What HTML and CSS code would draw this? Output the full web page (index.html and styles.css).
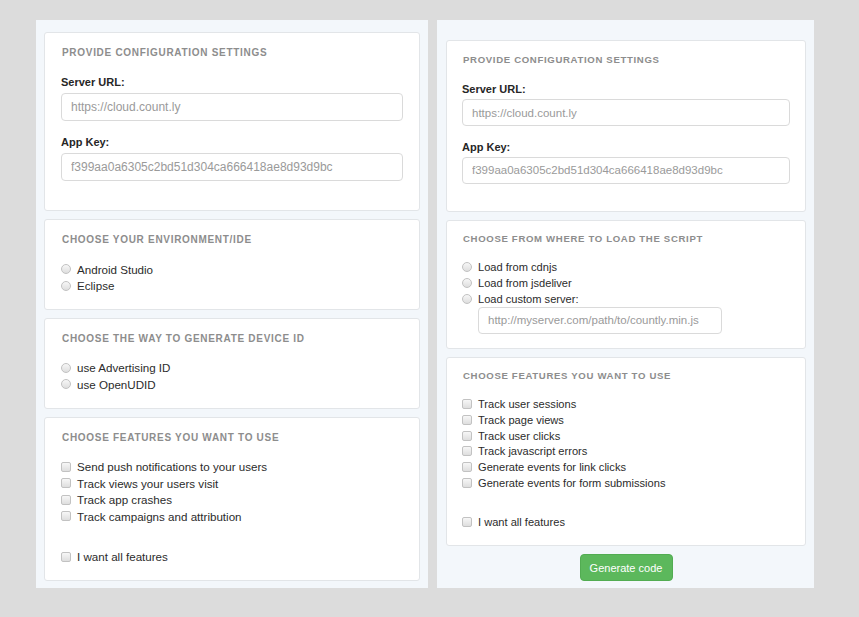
FILE: index.html
```html
<!DOCTYPE html>
<html lang="en">
<head>
<meta charset="utf-8">
<title>Countly SDK configuration</title>
<link rel="stylesheet" href="styles.css">
</head>
<body>
<div class="page">
  <section class="panel panel-left">
    <div class="card card-config">
      <h3 class="card-title">Provide configuration settings</h3>
      <label class="field-label">Server URL:</label>
      <input class="text-input" type="text" placeholder="https://cloud.count.ly">
      <label class="field-label">App Key:</label>
      <input class="text-input last" type="text" placeholder="f399aa0a6305c2bd51d304ca666418ae8d93d9bc">
    </div>
    <div class="card card-choice">
      <h3 class="card-title">Choose your environment/IDE</h3>
      <div class="options">
        <label class="option"><input class="radio" type="radio" name="ide"><span>Android Studio</span></label>
        <label class="option"><input class="radio" type="radio" name="ide"><span>Eclipse</span></label>
      </div>
    </div>
    <div class="card card-choice">
      <h3 class="card-title">Choose the way to generate device ID</h3>
      <div class="options">
        <label class="option"><input class="radio" type="radio" name="devid"><span>use Advertising ID</span></label>
        <label class="option"><input class="radio" type="radio" name="devid"><span>use OpenUDID</span></label>
      </div>
    </div>
    <div class="card card-choice">
      <h3 class="card-title">Choose features you want to use</h3>
      <div class="options">
        <label class="option"><input class="check" type="checkbox"><span>Send push notifications to your users</span></label>
        <label class="option"><input class="check" type="checkbox"><span>Track views your users visit</span></label>
        <label class="option"><input class="check" type="checkbox"><span>Track app crashes</span></label>
        <label class="option"><input class="check" type="checkbox"><span>Track campaigns and attribution</span></label>
        <div class="spacer"></div>
        <label class="option"><input class="check" type="checkbox"><span>I want all features</span></label>
      </div>
    </div>
  </section>

  <section class="panel panel-right">
    <div class="card card-config">
      <h3 class="card-title">Provide configuration settings</h3>
      <label class="field-label">Server URL:</label>
      <input class="text-input" type="text" placeholder="https://cloud.count.ly">
      <label class="field-label">App Key:</label>
      <input class="text-input last" type="text" placeholder="f399aa0a6305c2bd51d304ca666418ae8d93d9bc">
    </div>
    <div class="card card-choice card-load">
      <h3 class="card-title">Choose from where to load the script</h3>
      <div class="options">
        <label class="option"><input class="radio" type="radio" name="src"><span>Load from cdnjs</span></label>
        <label class="option"><input class="radio" type="radio" name="src"><span>Load from jsdeliver</span></label>
        <label class="option"><input class="radio" type="radio" name="src"><span>Load custom server:</span></label>
        <input class="text-input custom-server" type="text" placeholder="http://myserver.com/path/to/countly.min.js">
      </div>
    </div>
    <div class="card card-choice card-features">
      <h3 class="card-title">Choose features you want to use</h3>
      <div class="options">
        <label class="option"><input class="check" type="checkbox"><span>Track user sessions</span></label>
        <label class="option"><input class="check" type="checkbox"><span>Track page views</span></label>
        <label class="option"><input class="check" type="checkbox"><span>Track user clicks</span></label>
        <label class="option"><input class="check" type="checkbox"><span>Track javascript errors</span></label>
        <label class="option"><input class="check" type="checkbox"><span>Generate events for link clicks</span></label>
        <label class="option"><input class="check" type="checkbox"><span>Generate events for form submissions</span></label>
        <div class="spacer"></div>
        <label class="option"><input class="check" type="checkbox"><span>I want all features</span></label>
      </div>
    </div>
    <div class="actions">
      <button class="btn-generate" type="button">Generate code</button>
    </div>
  </section>
</div>
</body>
</html>
```

FILE: styles.css
```css
html, body {
  margin: 0;
  padding: 0;
}

body {
  background: #dcdcdc;
  font-family: "Liberation Sans", Arial, Helvetica, sans-serif;
  color: #2e2e2e;
}

.page {
  display: flex;
  align-items: flex-start;
  gap: 9px;
  padding: 20px 0 0 36px;
}

.panel {
  background: #f3f7fb;
  box-sizing: border-box;
  display: flex;
  flex-direction: column;
}

.panel-left {
  width: 392px;
  padding: 12px 8px 7px 8px;
  gap: 8px;
}

.panel-right {
  width: 377px;
  padding: 20px 8px 7px 9px;
  gap: 8.5px;
}

.card {
  background: #ffffff;
  border: 1px solid #e2e5e8;
  border-radius: 3px;
  display: flex;
  flex-direction: column;
}

.card-title {
  margin: 0;
  padding-left: 1px;
  font-size: 10px;
  line-height: 12px;
  font-weight: bold;
  letter-spacing: 0.7px;
  text-transform: uppercase;
  color: #8d8d8d;
  white-space: nowrap;
}

.field-label {
  display: block;
  font-size: 11px;
  font-weight: bold;
  line-height: 16px;
  color: #262626;
}

.text-input {
  box-sizing: border-box;
  display: block;
  width: 100%;
  height: 28px;
  border: 1px solid #dadada;
  border-radius: 4px;
  background: #fff;
  padding: 0 9px;
  font-family: "Liberation Sans", Arial, Helvetica, sans-serif;
  font-size: 12px;
  color: #555;
  outline: none;
}

.text-input::placeholder {
  color: #9a9a9a;
}

/* ---------- left panel ---------- */
.panel-left .card-config {
  padding: 14px 16px 29px 16px;
}

.panel-left .card-config .card-title {
  margin-bottom: 15px;
}

.panel-left .card-config .field-label {
  margin-bottom: 3px;
}

.panel-left .card-config .text-input {
  margin-bottom: 13px;
}

.panel-left .card-config .text-input.last {
  margin-bottom: 0;
}

.panel-left .card-choice {
  padding: 14px 16px 15px 16px;
}

.panel-left .card-choice .card-title {
  margin-bottom: 14.75px;
}

.panel-left .option {
  height: 16.5px;
  font-size: 11.6px;
}

.panel-left .spacer {
  height: 24px;
}

/* ---------- right panel ---------- */
.panel-right .card-title {
  font-size: 9.6px;
  letter-spacing: 0.66px;
}

.panel-right .text-input {
  height: 27px;
  font-size: 11.5px;
}

.panel-right .card-config {
  padding: 13px 15px 27px 15px;
}

.panel-right .card-config .card-title {
  margin-bottom: 15px;
}

.panel-right .card-config .field-label {
  margin-bottom: 2px;
}

.panel-right .card-config .text-input {
  margin-bottom: 12.7px;
}

.panel-right .card-config .text-input.last {
  margin-bottom: 0;
}

.panel-right .card-choice {
  padding: 12px 15px 15px 15px;
}

.panel-right .card-load {
  padding-top: 12px;
  padding-bottom: 14px;
}

.panel-right .card-choice .card-title {
  margin-bottom: 14px;
}

.panel-right .option {
  height: 15.8px;
  font-size: 11.1px;
}

.panel-right .spacer {
  height: 23.2px;
}

.custom-server {
  margin-left: 16px;
  width: 244px !important;
}

/* ---------- options ---------- */
.options {
  display: flex;
  flex-direction: column;
}

.option {
  display: flex;
  align-items: center;
  color: #2b2b2b;
  white-space: nowrap;
}

.radio,
.check {
  -webkit-appearance: none;
  appearance: none;
  box-sizing: border-box;
  width: 10px;
  height: 10px;
  margin: 0 6px 0 0;
  border: 1px solid #c2c2c2;
  background: linear-gradient(#f7f7f7, #dedede);
  flex: none;
}

.radio {
  border-radius: 50%;
}

.check {
  border-radius: 2px;
}

/* ---------- actions ---------- */
.actions {
  display: flex;
  justify-content: center;
}

.btn-generate {
  width: 93px;
  height: 27px;
  border: 1px solid #52ac52;
  border-radius: 4px;
  background: #5cb85c;
  color: #ffffff;
  font-family: "Liberation Sans", Arial, Helvetica, sans-serif;
  font-size: 11px;
  padding: 0;
  cursor: pointer;
}
```
